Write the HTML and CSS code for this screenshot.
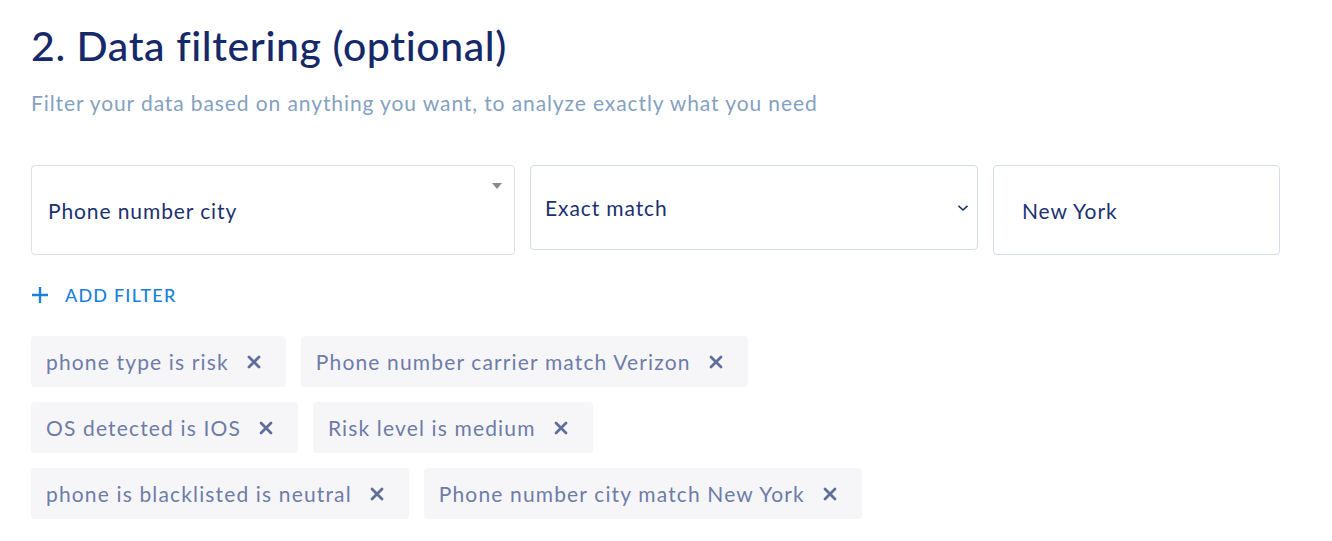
FILE: index.html
```html
<!DOCTYPE html>
<html lang="en">
<head>
<meta charset="utf-8">
<title>Data filtering</title>
<link rel="stylesheet" href="styles.css">
</head>
<body>
<section class="section">
  <h2 class="title">2. Data filtering (optional)</h2>
  <p class="subtitle">Filter your data based on anything you want, to analyze exactly what you need</p>

  <div class="filter-row">
    <div class="field field-attr">
      <span class="field-text">Phone number city</span>
      <span class="caret"></span>
    </div>
    <div class="field field-op">
      <span class="field-text">Exact match</span>
      <svg class="chev" width="12" height="8" viewBox="0 0 12 8"><path d="M1.5 1.8 L6 6 L10.5 1.8" fill="none" stroke="#1d2f66" stroke-width="1.6"/></svg>
    </div>
    <div class="field field-val">
      <span class="field-text">New York</span>
    </div>
  </div>

  <button class="add-filter" type="button">
    <svg width="18" height="18" viewBox="0 0 18 18"><path d="M9 1v16M1 9h16" stroke="#1b7fdb" stroke-width="2.4" fill="none"/></svg>
    <span>ADD FILTER</span>
  </button>

  <div class="chips">
    <div class="chip-row">
      <span class="chip">phone type is risk<svg class="x" width="14" height="14" viewBox="0 0 14 14"><path d="M2 2L12 12M12 2L2 12" stroke="#5f6e9b" stroke-width="2.8" stroke-linecap="round"/></svg></span>
      <span class="chip">Phone number carrier match Verizon<svg class="x" width="14" height="14" viewBox="0 0 14 14"><path d="M2 2L12 12M12 2L2 12" stroke="#5f6e9b" stroke-width="2.8" stroke-linecap="round"/></svg></span>
    </div>
    <div class="chip-row">
      <span class="chip">OS detected is IOS<svg class="x" width="14" height="14" viewBox="0 0 14 14"><path d="M2 2L12 12M12 2L2 12" stroke="#5f6e9b" stroke-width="2.8" stroke-linecap="round"/></svg></span>
      <span class="chip">Risk level is medium<svg class="x" width="14" height="14" viewBox="0 0 14 14"><path d="M2 2L12 12M12 2L2 12" stroke="#5f6e9b" stroke-width="2.8" stroke-linecap="round"/></svg></span>
    </div>
    <div class="chip-row">
      <span class="chip">phone is blacklisted is neutral<svg class="x" width="14" height="14" viewBox="0 0 14 14"><path d="M2 2L12 12M12 2L2 12" stroke="#5f6e9b" stroke-width="2.8" stroke-linecap="round"/></svg></span>
      <span class="chip">Phone number city match New York<svg class="x" width="14" height="14" viewBox="0 0 14 14"><path d="M2 2L12 12M12 2L2 12" stroke="#5f6e9b" stroke-width="2.8" stroke-linecap="round"/></svg></span>
    </div>
  </div>
</section>
</body>
</html>
```

FILE: styles.css
```css
* { box-sizing: border-box; }
html, body { margin: 0; background: #ffffff; }
body {
  font-family: "Lato", "Open Sans", sans-serif;
}
.section {
  padding: 20px 0 0 31px;
}
.title {
  margin: 0;
  font-size: 41px;
  line-height: 52px;
  font-weight: 500;
  letter-spacing: 0.6px;
  color: #15296a;
}
.subtitle {
  margin: 18px 0 0;
  font-size: 21px;
  line-height: 26px;
  letter-spacing: 0.9px;
  color: #85a1c1;
}
.filter-row {
  display: flex;
  align-items: flex-start;
  gap: 15px;
  margin-top: 49px;
}
.field {
  position: relative;
  display: flex;
  align-items: center;
  height: 90px;
  border: 1px solid #dfdfe2;
  border-radius: 4px;
  font-size: 21px;
  letter-spacing: 0.9px;
  color: #1c3170;
}
.field-attr { width: 484px; padding: 0 16px; }
.field-op { width: 448px; height: 85px; padding: 0 8px 0 14px; justify-content: space-between; border-color: #d6dce6; }
.field-val { width: 287px; padding: 0 28px; border-color: #d3ddeb; }
.field-text { position: relative; }
.field-attr .field-text { top: 0; }
.caret {
  position: absolute;
  right: 12px;
  top: 17px;
  width: 0; height: 0;
  border-left: 5px solid transparent;
  border-right: 5px solid transparent;
  border-top: 6px solid #8a8a8a;
}
.add-filter {
  display: flex;
  align-items: center;
  gap: 16px;
  margin: 29px 0 0;
  padding: 0;
  border: 0;
  background: none;
  font-family: inherit;
  font-size: 18px;
  font-weight: 500;
  color: #1b7fdb;
  letter-spacing: 1.2px;
}
.chips {
  display: flex;
  flex-direction: column;
  gap: 15px;
  margin-top: 30px;
}
.chip-row { display: flex; gap: 15px; }
.chip {
  display: inline-flex;
  align-items: center;
  height: 51px;
  padding: 0 25px 0 15px;
  background: #f6f6f9;
  border-radius: 4px;
  font-size: 21px;
  letter-spacing: 1.15px;
  color: #6e7ca8;
}
.x {
  margin-left: 18px;
  flex: none;
}
```
